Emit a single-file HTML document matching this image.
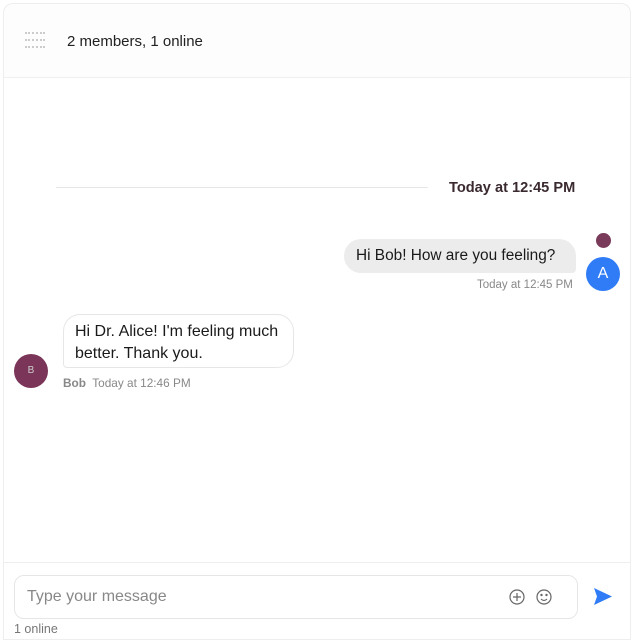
<!DOCTYPE html>
<html><head><meta charset="utf-8"><style>
*{box-sizing:border-box;margin:0;padding:0}
body{width:634px;height:640px;background:#fff;font-family:"Liberation Sans",sans-serif;position:relative;overflow:hidden;color:#1a1a1a}
.frame{position:absolute;left:3px;top:3px;right:3px;bottom:0;border:1px solid #eee;border-radius:10px 10px 0 0;background:#fff}
.hdr{position:absolute;left:4px;top:4px;width:626px;height:74px;border-bottom:1px solid #f0f0f0;background:#fdfdfd;border-radius:10px 10px 0 0}
.ham{position:absolute;left:25px;width:20px;height:1px;border-top:2px dotted #ccc}
.t{position:absolute;white-space:nowrap}
.av{position:absolute;border-radius:50%}
</style></head><body>
<div class="frame"></div>
<div class="hdr"></div>
<div class="ham" style="top:32px"></div>
<div class="ham" style="top:39px"></div>
<div class="ham" style="top:46px"></div>
<div class="t" style="left:67px;top:33px;font-size:15px;color:#222">2 members, 1 online</div>

<div style="position:absolute;left:56px;top:187px;width:372px;height:1px;background:#e6e6e6"></div>
<div class="t" style="left:449px;top:180px;font-size:14.6px;font-weight:bold;color:#3a2a30">Today at 12:45 PM</div>

<div class="av" style="left:596px;top:233px;width:15px;height:15px;background:#7a3a5a"></div>
<div style="position:absolute;left:344px;top:239px;width:232px;height:34px;background:#ececec;border-radius:17px 17px 4px 17px"></div>
<div class="t" style="left:356px;top:247px;font-size:15.4px">Hi Bob! How are you feeling?</div>
<div class="av" style="left:586px;top:257px;width:34px;height:34px;background:#2f7cf6;color:#fff;font-size:16px;text-align:center;line-height:34px">A</div>
<div class="t" style="left:477px;top:279px;font-size:11.5px;color:#888">Today at 12:45 PM</div>

<div style="position:absolute;left:63px;top:314px;width:231px;height:54px;border:1px solid #e6e6e6;border-radius:17px 17px 17px 4px;background:#fff"></div>
<div class="t" style="left:75px;top:321px;font-size:16px;line-height:22px">Hi Dr. Alice! I'm feeling much<br>better. Thank you.</div>
<div class="av" style="left:14px;top:354px;width:34px;height:34px;background:#7a3558;color:#ccc;font-size:10px;text-align:center;line-height:34px">B</div>
<div class="t" style="left:63px;top:376px;font-size:11.8px;color:#888"><b>Bob</b>&nbsp; Today at 12:46 PM</div>

<div style="position:absolute;left:4px;top:562px;width:626px;height:1px;background:#eee"></div>
<div style="position:absolute;left:14px;top:575px;width:564px;height:44px;border:1px solid #e6e6e6;border-radius:10px;background:#fff"></div>
<div class="t" style="left:27px;top:588px;font-size:16px;color:#888">Type your message</div>
<svg style="position:absolute;left:508px;top:588px" width="46" height="18" viewBox="0 0 46 18" fill="none" stroke="#666" stroke-width="1.2">
<circle cx="9" cy="9" r="7"/><path d="M9 5v8M5 9h8"/>
<circle cx="36" cy="9" r="7"/><path d="M33 11q3 3 6 0"/><circle cx="33.5" cy="7" r=".6"/><circle cx="38.5" cy="7" r=".6"/>
</svg>
<svg style="position:absolute;left:593px;top:587px" width="20" height="19" viewBox="0 0 20 19"><path d="M1 1L19 9.5L1 18L4 9.5Z" fill="#2f7cf6"/></svg>
<div class="t" style="left:14px;top:622px;font-size:12.5px;color:#777">1 online</div>
</body></html>
